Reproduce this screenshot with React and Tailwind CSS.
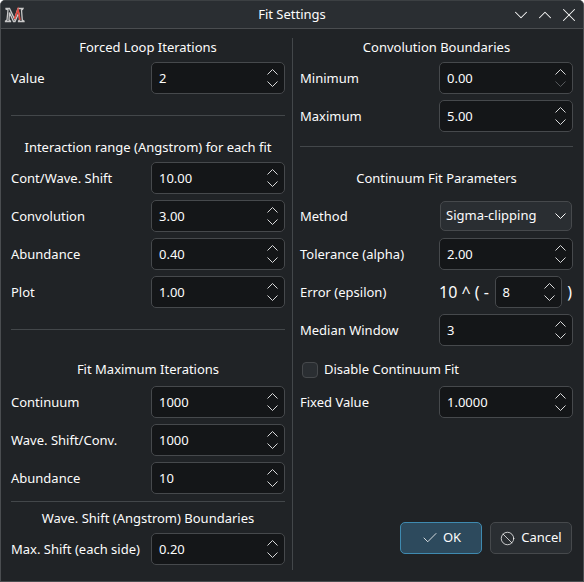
import React from "react";
import { Check, ChevronDown, ChevronUp, Ban, X } from "lucide-react";

const Chevron = ({ up = false, className = "" }) => (
  <svg width="11" height="6" viewBox="0 0 11 6" fill="none" className={className}>
    <path d={up ? "M.5 5.500 5.500.5l5 5" : "M.5.5l5 5 5-5"} stroke="currentColor" />
  </svg>
);

const SpinBox = ({ value, width = "w-[134px]", downDisabled = false }) => (
  <div
    className={`${width} h-8 shrink-0 flex items-center justify-between rounded-[5px] border border-[#46494c] bg-[#141618] text-[13px] pl-[7px] pr-[6px]`}
  >
    <span className="text-[#fcfcfc] pt-px">{value}</span>
    <div className="flex flex-col items-center gap-[6px]">
      <Chevron up className="text-[#d8d9da]" />
      <Chevron className={downDisabled ? "text-[#55585b]" : "text-[#d8d9da]"} />
    </div>
  </div>
);

const Row = ({ label, children, className = "" }) => (
  <div className={`flex items-center justify-between h-8 ${className}`}>
    <span className="pt-px">{label}</span>
    {children}
  </div>
);

const Title = ({ children, className = "" }) => (
  <div className={`text-center leading-[18px] ${className}`}>{children}</div>
);

const Divider = ({ className = "" }) => (
  <div className={`h-px bg-[#43474a] ${className}`} />
);

const Logo = () => (
  <svg width="22" height="20" viewBox="0 0 22 20" fill="none">
    <path
      d="M2 3.500h3.500L10.500 14 14 3.500h5l-.5 1-1 .5.8 10 1.700 1v.5h-5.500v-.5l1-1-.6-7.500L11 16.500H9.500L5.500 7.500 5 15l1.500 1v.5h-5V16l1.500-1 1-10-2-1z"
      stroke="#c9c9c9"
      strokeWidth="1.300"
    />
    <path d="M10.500 14 14 4.500 16 15" stroke="#e2483f" strokeWidth="1.600" />
  </svg>
);

const App = () => {
  return (
    <div className="w-[584px] h-[582px] flex flex-col bg-[#202326] text-[#fcfcfc] text-[13px] font-['Noto_Sans',sans-serif] border border-[#4a4d50] border-t-[#3c4043] rounded-t-[5px] overflow-hidden">
      <div className="h-[28px] shrink-0 flex items-center bg-[#2a2e32] border-b border-[#4a4d50] px-[3px]">
        <div className="w-[70px]">
          <Logo />
        </div>
        <span className="flex-1 text-center">Fit Settings</span>
        <div className="w-[70px] flex items-center gap-[2px]">
          <ChevronDown size={22} strokeWidth={1.100} />
          <ChevronUp size={22} strokeWidth={1.100} />
          <X size={22} strokeWidth={1.100} />
        </div>
      </div>

      <div className="flex-1 flex pl-[10px] pr-[10px] pt-[9px]">
        <div className="w-[274px] shrink-0 flex flex-col">
          <Title>Forced Loop Iterations</Title>
          <Row label="Value" className="mt-[6px]">
            <SpinBox value="2" />
          </Row>
          <Divider className="mt-[21px]" />
          <Title className="mt-[22px]">Interaction range (Angstrom) for each fit</Title>
          <Row label="Cont/Wave. Shift" className="mt-[6px]">
            <SpinBox value="10.00" />
          </Row>
          <Row label="Convolution" className="mt-[6px]">
            <SpinBox value="3.00" />
          </Row>
          <Row label="Abundance" className="mt-[6px]">
            <SpinBox value="0.40" />
          </Row>
          <Row label="Plot" className="mt-[6px]">
            <SpinBox value="1.00" />
          </Row>
          <Divider className="mt-[21px]" />
          <Title className="mt-[30px]">Fit Maximum Iterations</Title>
          <Row label="Continuum" className="mt-[8px]">
            <SpinBox value="1000" />
          </Row>
          <Row label="Wave. Shift/Conv." className="mt-[6px]">
            <SpinBox value="1000" />
          </Row>
          <Row label="Abundance" className="mt-[6px]">
            <SpinBox value="10" />
          </Row>
          <Divider className="mt-[7px]" />
          <Title className="mt-[7px]">Wave. Shift (Angstrom) Boundaries</Title>
          <Row label="Max. Shift (each side)" className="mt-[6px]">
            <SpinBox value="0.20" />
          </Row>
        </div>

        <div className="w-px h-[532px] ml-[7px] bg-[#43474a]" />

        <div className="w-[273px] ml-[7px] shrink-0 flex flex-col">
          <Title>Convolution Boundaries</Title>
          <Row label="Minimum" className="mt-[6px]">
            <SpinBox value="0.00" downDisabled />
          </Row>
          <Row label="Maximum" className="mt-[6px]">
            <SpinBox value="5.00" />
          </Row>
          <Divider className="mt-[14px]" />
          <Title className="mt-[22px]">Continuum Fit Parameters</Title>
          <Row label="Method" className="mt-[13px]">
            <div className="w-[132px] h-[30px] mr-px flex items-center justify-between rounded-[5px] border border-[#46494c] bg-[#2a2e32] pl-[5px] pr-[5px]">
              <span>Sigma-clipping</span>
              <Chevron />
            </div>
          </Row>
          <Row label="Tolerance (alpha)" className="mt-[6px]">
            <SpinBox value="2.00" />
          </Row>
          <Row label="Error (epsilon)" className="mt-[6px]">
            <div className="w-[134px] flex items-center justify-between text-[16px]">
              <span>10 ^ ( -</span>
              <SpinBox value="8" width="w-[67px]" />
              <span className="mr-px">)</span>
            </div>
          </Row>
          <Row label="Median Window" className="mt-[6px]">
            <SpinBox value="3" />
          </Row>
          <label className="flex items-center gap-[6px] h-[18px] mt-[15px] ml-[2px]">
            <span className="w-4 h-4 rounded-[4px] border border-[#46494c] bg-[#2a2e32]" />
            <span>Disable Continuum Fit</span>
          </label>
          <Row label="Fixed Value" className="mt-[7px]">
            <SpinBox value="1.0000" />
          </Row>
          <div className="flex justify-end gap-2 mt-[104px] mr-px">
            <button className="w-[82px] h-8 flex items-center justify-center gap-[4px] rounded-[5px] border border-[#3f8ab0] bg-[#2d4a5d]">
              <Check size={18} strokeWidth={1.100} />
              OK
            </button>
            <button className="w-[82px] h-8 flex items-center justify-center gap-[6px] rounded-[5px] border border-[#46494c] bg-[#2a2e32]">
              <Ban size={15} strokeWidth={1.200} />
              Cancel
            </button>
          </div>
        </div>
      </div>
    </div>
  );
};

export default App;
